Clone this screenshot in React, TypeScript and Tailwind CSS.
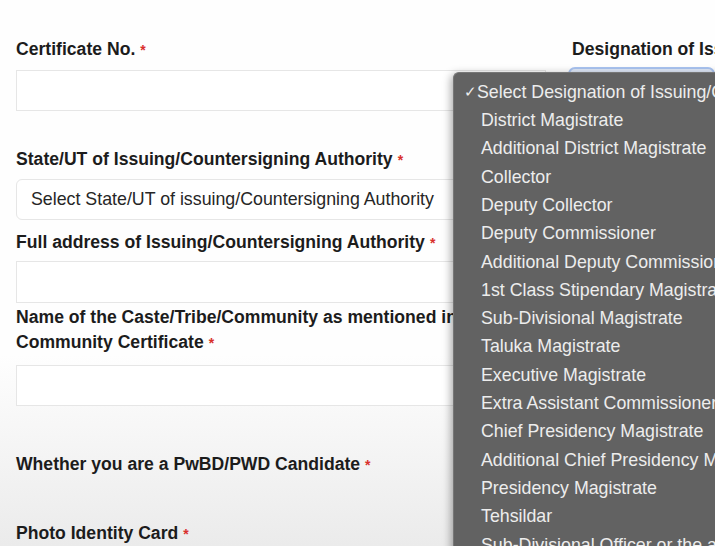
import React from "react";

const Star = () => <span className="text-[#d9302c] text-[14px] align-top ml-[5px] relative top-[1px]">*</span>;

const Label = ({ children, className = "" }: { children: React.ReactNode; className?: string }) => (
  <div className={"font-bold text-[17.6px] leading-[24px] text-[#1c1c1c] whitespace-nowrap " + className}>{children}</div>
);

const options = [
  "District Magistrate",
  "Additional District Magistrate",
  "Collector",
  "Deputy Collector",
  "Deputy Commissioner",
  "Additional Deputy Commissioner",
  "1st Class Stipendary Magistrate",
  "Sub-Divisional Magistrate",
  "Taluka Magistrate",
  "Executive Magistrate",
  "Extra Assistant Commissioner",
  "Chief Presidency Magistrate",
  "Additional Chief Presidency Magistrate",
  "Presidency Magistrate",
  "Tehsildar",
  "Sub-Divisional Officer or the area",
];

export default function App() {
  return (
    <div
      className="relative w-[715px] h-[546px] overflow-hidden bg-gradient-to-b from-[#fefefe] from-[65%] to-[#ebebeb]"
      style={{ fontFamily: '"Liberation Sans", Arial, Helvetica, sans-serif' }}
    >
      <div className="flex gap-[26px] pl-[16px] pt-[37px]">
        {/* Left column */}
        <div className="w-[530px] shrink-0 flex flex-col">
          <Label>
            Certificate No.<Star />
          </Label>
          <div className="mt-[9px] h-[41px] border border-[#e6e6e6] bg-white" />

          <Label className="mt-[36px]">
            State/UT of Issuing/Countersigning Authority<Star />
          </Label>
          <div className="mt-[8px] h-[41px] rounded-[6px] border border-[#e6e6e6] bg-white flex items-center pl-[14px] text-[17.8px] text-[#262626] whitespace-nowrap">
            Select State/UT of issuing/Countersigning Authority
          </div>

          <Label className="mt-[10px]">
            Full address of Issuing/Countersigning Authority<Star />
          </Label>
          <div className="mt-[7px] h-[42px] border border-[#e6e6e6] bg-white" />

          <div className="mt-[2px] font-bold text-[17.6px] leading-[25px] text-[#1c1c1c] whitespace-nowrap">
            Name of the Caste/Tribe/Community as mentioned in the
            <br />
            Community Certificate<Star />
          </div>
          <div className="mt-[10px] h-[41px] border border-[#e6e6e6] bg-white" />

          <Label className="mt-[46px]">
            Whether you are a PwBD/PWD Candidate<Star />
          </Label>

          <Label className="mt-[45px]">
            Photo Identity Card<Star />
          </Label>
        </div>

        {/* Right column */}
        <div className="flex-1 flex flex-col min-w-0">
          <Label>
            Designation of Issuing/Countersigning Authority<Star />
          </Label>
          <div className="mt-[6px] ml-[-4px] h-[42px] rounded-[7px] border-2 border-[#a9c3f0] bg-[#dfe8f8]" />
        </div>
      </div>

      {/* Native select dropdown overlay */}
      <div className="absolute left-[453px] top-[72px] w-[340px] h-[500px] rounded-tl-[6px] bg-[#626262] border-l border-t border-[#777777] shadow-[-2px_2px_8px_rgba(0,0,0,0.35)] pt-[5px] text-[#ededed] text-[17.8px]">
        <div className="h-[28.3px] flex items-center whitespace-nowrap">
          <span className="w-[27px] pl-[10px] text-[15px]">✓</span>
          Select Designation of Issuing/Countersigning Authority
        </div>
        {options.map((o) => (
          <div key={o} className="h-[28.3px] flex items-center whitespace-nowrap pl-[27px]">
            {o}
          </div>
        ))}
      </div>
    </div>
  );
}
